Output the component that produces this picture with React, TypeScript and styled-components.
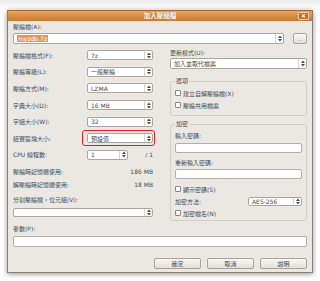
import React from 'react';
import styled, { createGlobalStyle } from 'styled-components';

const GlobalStyle = createGlobalStyle`
  html, body {
    margin: 0;
    padding: 0;
    background: #fff;
  }
  body {
    font-family: "DejaVu Sans", "Noto Sans CJK TC", sans-serif;
    font-size: 6px;
    color: #4a4a4a;
  }
`;

const Page = styled.div`
  width: 320px;
  height: 281px;
  box-sizing: border-box;
  padding: 10px 7px 0;
  background: linear-gradient(#ececec, #fff 10px);
`;

const Window = styled.div`
  width: 306px;
  height: 263px;
  box-sizing: border-box;
  border: 1px solid #85817a;
  border-top-color: #b06a2a;
  background: #ebe8e3;
  box-shadow: 0 1px 5px rgba(0, 0, 0, 0.45);
  display: flex;
  flex-direction: column;
`;

const TitleBar = styled.div`
  height: 10px;
  display: grid;
  grid-template-columns: 1fr auto 1fr;
  align-items: center;
  background: linear-gradient(#e6a560, #c97a31);
  color: #fff;
  font-weight: bold;
  font-size: 6.5px;
`;

const Title = styled.div`
  grid-column: 2;
  line-height: 10px;
  text-shadow: 0 0 1px rgba(120, 60, 10, 0.6);
`;

const CloseButton = styled.div`
  justify-self: end;
  margin-right: 3px;
  width: 11px;
  height: 8px;
  box-sizing: border-box;
  border: 1px solid rgba(255, 240, 220, 0.75);
  border-radius: 2px;
  background: #c06d28;
  display: flex;
  align-items: center;
  justify-content: center;
  font-size: 7px;
  line-height: 8px;
`;

const Body = styled.div`
  flex: 1;
  display: flex;
  flex-direction: column;
  padding: 2px 5px 0;
`;

const Label = styled.div<{ mt?: number }>`
  height: 8px;
  line-height: 8px;
  white-space: nowrap;
  margin-top: ${({ mt }) => mt ?? 0}px;
`;

const ArchiveRow = styled.div`
  display: flex;
  gap: 9px;
  margin-top: 2px;
`;

const ComboBox = styled.div<{ w?: number; h?: number; mt?: number }>`
  box-sizing: border-box;
  width: ${({ w }) => (w ? `${w}px` : '100%')};
  flex: ${({ w }) => (w ? 'none' : '1')};
  height: ${({ h }) => h ?? 10}px;
  margin-top: ${({ mt }) => mt ?? 0}px;
  border: 1px solid #aaa69f;
  border-radius: 2px;
  background: #fff;
  display: flex;
  align-items: center;
`;

const ComboText = styled.div`
  flex: 1;
  padding-left: 3px;
  white-space: nowrap;
  overflow: hidden;
`;

const Selected = styled.span`
  background: #e3964c;
  color: #fff;
  padding: 0 1px;
`;

const Spin = styled.div`
  width: 7px;
  align-self: stretch;
  border-left: 1px solid #d8d4ce;
  display: flex;
  align-items: center;
  justify-content: center;
`;

const BrowseButton = styled.div`
  width: 14px;
  height: 11px;
  box-sizing: border-box;
  border: 1px solid #a9a59e;
  border-radius: 2px;
  background: linear-gradient(#f7f6f4, #e4e1dc);
  display: flex;
  align-items: center;
  justify-content: center;
  color: #777;
  font-size: 5px;
`;

const Columns = styled.div`
  display: grid;
  grid-template-columns: 140px 137px;
  column-gap: 17px;
  align-items: start;
  margin-top: 3px;
`;

const Column = styled.div`
  display: flex;
  flex-direction: column;
`;

const FormRow = styled.div`
  height: 16.6px;
  display: flex;
  align-items: center;
`;

const RowLabel = styled.div`
  width: 74px;
  white-space: nowrap;
`;

const Highlight = styled.div<{ on?: boolean }>`
  position: relative;
  &::after {
    content: '';
    display: ${({ on }) => (on ? 'block' : 'none')};
    position: absolute;
    top: -3px;
    bottom: -3px;
    left: -5px;
    right: -2px;
    border: 1.5px solid #e0201c;
    border-radius: 3px;
  }
`;

const Suffix = styled.div`
  flex: 1;
  text-align: right;
`;

const MemRow = styled.div<{ mt?: number }>`
  height: 13px;
  display: flex;
  align-items: center;
  justify-content: space-between;
  margin-top: ${({ mt }) => mt ?? 0}px;
`;

const Group = styled.fieldset<{ mt: number }>`
  margin: ${({ mt }) => mt}px 0 0;
  padding: 2px 4px 1px;
  border: 1px solid #d2cec7;
  border-radius: 3px;
  min-width: 0;
  display: flex;
  flex-direction: column;
`;

const Legend = styled.legend`
  padding: 0 1px;
  line-height: 8px;
  height: 8px;
`;

const CheckRow = styled.div<{ mt?: number }>`
  height: 12px;
  display: flex;
  align-items: center;
  gap: 2px;
  margin-top: ${({ mt }) => mt ?? 0}px;
  white-space: nowrap;
`;

const CheckBox = styled.span`
  width: 6px;
  height: 6px;
  box-sizing: border-box;
  border: 1px solid #8e8a83;
  border-radius: 1px;
  background: #fff;
`;

const TextInput = styled.div<{ h?: number; mt?: number }>`
  box-sizing: border-box;
  height: ${({ h }) => h ?? 10}px;
  margin-top: ${({ mt }) => mt ?? 0}px;
  border: 1px solid #b3afa8;
  border-radius: 2px;
  background: #fff;
`;

const MethodRow = styled.div`
  height: 12px;
  display: flex;
  align-items: center;
  justify-content: space-between;
`;

const ButtonRow = styled.div`
  display: flex;
  justify-content: flex-end;
  gap: 6px;
  margin-top: 11px;
`;

const Button = styled.div`
  width: 47px;
  height: 11px;
  box-sizing: border-box;
  border: 1px solid #a8a49d;
  border-radius: 2px;
  background: linear-gradient(#f8f7f5, #e3e0db);
  display: flex;
  align-items: center;
  justify-content: center;
`;

const SpinArrows = () => (
  <svg width="4" height="7" viewBox="0 0 4 7">
    <polygon points="0,3 2,0.5 4,3" fill="#4a4a4a" />
    <polygon points="0,4 2,6.5 4,4" fill="#4a4a4a" />
  </svg>
);

type ComboProps = {
  value?: React.ReactNode;
  w?: number;
  h?: number;
  mt?: number;
};

const Combo: React.FC<ComboProps> = ({ value, w, h, mt }) => (
  <ComboBox w={w} h={h} mt={mt}>
    <ComboText>{value}</ComboText>
    <Spin>
      <SpinArrows />
    </Spin>
  </ComboBox>
);

const leftRows = [
  { label: '壓縮檔格式(F):', value: '7z' },
  { label: '壓縮等級(L):', value: '一般壓縮' },
  { label: '壓縮方式(M):', value: 'LZMA' },
  { label: '字典大小(D):', value: '16 MB' },
  { label: '字組大小(W):', value: '32' },
  { label: '結實區塊大小:', value: '預設值', highlight: true },
];

const App: React.FC = () => {
  return (
    <>
      <GlobalStyle />
      <Page>
        <Window>
          <TitleBar>
            <Title>加入壓縮檔</Title>
            <CloseButton>×</CloseButton>
          </TitleBar>
          <Body>
            <Label>壓縮檔(A):</Label>
            <ArchiveRow>
              <Combo h={11} value={<Selected>myzdb.7z</Selected>} />
              <BrowseButton>...</BrowseButton>
            </ArchiveRow>

            <Columns>
              <Column>
                {leftRows.map((row) => (
                  <FormRow key={row.label}>
                    <RowLabel>{row.label}</RowLabel>
                    <Highlight on={row.highlight}>
                      <Combo w={66} value={row.value} />
                    </Highlight>
                  </FormRow>
                ))}
                <FormRow>
                  <RowLabel>CPU 線程數:</RowLabel>
                  <Combo w={41} value="1" />
                  <Suffix>/ 1</Suffix>
                </FormRow>
                <MemRow mt={2.3}>
                  <span>壓縮時記憶體使用:</span>
                  <span>186 MB</span>
                </MemRow>
                <MemRow>
                  <span>解壓縮時記憶體使用:</span>
                  <span>18 MB</span>
                </MemRow>
                <Label mt={4.5}>分割壓縮檔，位元組(V):</Label>
                <Combo mt={4} />
              </Column>

              <Column>
                <Label mt={2}>更新模式(U):</Label>
                <Combo mt={1} value="加入並取代檔案" />
                <Group mt={8}>
                  <Legend>選項</Legend>
                  <CheckRow>
                    <CheckBox />
                    建立自解壓縮檔(X)
                  </CheckRow>
                  <CheckRow>
                    <CheckBox />
                    壓縮共用檔案
                  </CheckRow>
                  <div style={{ height: 3 }} />
                </Group>
                <Group mt={4}>
                  <Legend>加密</Legend>
                  <Label mt={2}>輸入密碼:</Label>
                  <TextInput mt={3} />
                  <Label mt={6}>重新輸入密碼:</Label>
                  <TextInput mt={2} />
                  <CheckRow mt={4}>
                    <CheckBox />
                    顯示密碼(S)
                  </CheckRow>
                  <MethodRow>
                    <span>加密方法:</span>
                    <Combo w={54} h={9} value="AES-256" />
                  </MethodRow>
                  <CheckRow>
                    <CheckBox />
                    加密檔名(N)
                  </CheckRow>
                </Group>
              </Column>
            </Columns>

            <Label mt={4}>參數(P):</Label>
            <TextInput h={11} mt={3} />

            <ButtonRow>
              <Button>確定</Button>
              <Button>取消</Button>
              <Button>說明</Button>
            </ButtonRow>
          </Body>
        </Window>
      </Page>
    </>
  );
};

export default App;
